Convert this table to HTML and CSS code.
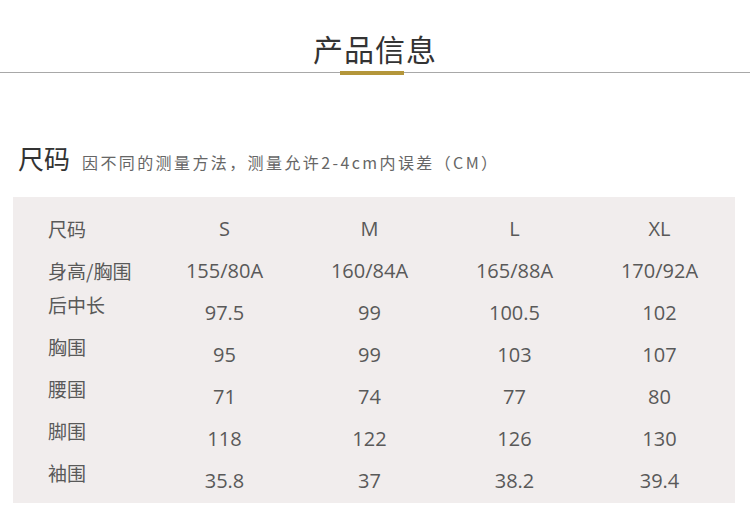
FILE: index.html
```html
<!DOCTYPE html>
<html lang="zh">
<head>
<meta charset="utf-8">
<link rel="stylesheet" href="styles.css">
</head>
<body>
<header class="title-bar">
  <h1 class="title">产品信息</h1>
  <div class="rule"><span class="accent"></span></div>
</header>
<section class="size">
  <div class="size-head">
    <h2 class="size-title">尺码</h2>
    <p class="size-note">因不同的测量方法，测量允许2-4cm内误差（CM）</p>
  </div>
  <div class="table">
    <div class="lbl">尺码</div><div class="val">S</div><div class="val">M</div><div class="val">L</div><div class="val">XL</div>
    <div class="lbl">身高/胸围</div><div class="val">155/80A</div><div class="val">160/84A</div><div class="val">165/88A</div><div class="val">170/92A</div>
    <div class="lbl up">后中长</div><div class="val">97.5</div><div class="val">99</div><div class="val">100.5</div><div class="val">102</div>
    <div class="lbl up">胸围</div><div class="val">95</div><div class="val">99</div><div class="val">103</div><div class="val">107</div>
    <div class="lbl up">腰围</div><div class="val">71</div><div class="val">74</div><div class="val">77</div><div class="val">80</div>
    <div class="lbl up">脚围</div><div class="val">118</div><div class="val">122</div><div class="val">126</div><div class="val">130</div>
    <div class="lbl up">袖围</div><div class="val">35.8</div><div class="val">37</div><div class="val">38.2</div><div class="val">39.4</div>
  </div>
</section>
</body>
</html>
```
FILE: styles.css
```css
html, body {
  margin: 0;
  padding: 0;
  background: #ffffff;
  width: 750px;
  height: 520px;
  overflow: hidden;
  font-family: "Open Sans", "Noto Sans CJK SC", sans-serif;
}

.title-bar {
  padding-top: 28px;
}

.title {
  margin: 0;
  text-align: center;
  font-family: "Noto Sans CJK SC", sans-serif;
  font-weight: 400;
  font-size: 30px;
  line-height: 40px;
  color: #333333;
  letter-spacing: 1px;
}

.rule {
  height: 1px;
  background: #a8a8a8;
  margin-top: 4px;
  display: flex;
  justify-content: center;
}

.accent {
  display: block;
  width: 64px;
  height: 4px;
  margin-left: -6px;
  margin-top: -1px;
  background: #b4963a;
}

.size {
  padding: 70px 13px 0 13px;
}

.size-head {
  display: flex;
  align-items: baseline;
  padding-left: 5px;
  height: 54px;
}

.size-title {
  margin: 0;
  font-family: "Noto Sans CJK SC", sans-serif;
  font-weight: 400;
  font-size: 26px;
  line-height: 30px;
  color: #333333;
}

.size-note {
  margin: 0 0 0 12px;
  font-family: "Noto Sans CJK SC", sans-serif;
  font-size: 16px;
  color: #666666;
  letter-spacing: 2.4px;
}

.table {
  background: #f1eded;
  width: 722px;
  box-sizing: border-box;
  padding: 11px 0 1px 35px;
  display: grid;
  grid-template-columns: 104px repeat(4, 145px);
  grid-auto-rows: 42px;
  color: #595959;
}

.lbl {
  font-family: "Noto Sans CJK SC", sans-serif;
  font-size: 19px;
  line-height: 42px;
}

.lbl.up {
  margin-top: -8px;
}

.val {
  text-align: center;
  font-size: 20px;
  line-height: 42px;
}
```
